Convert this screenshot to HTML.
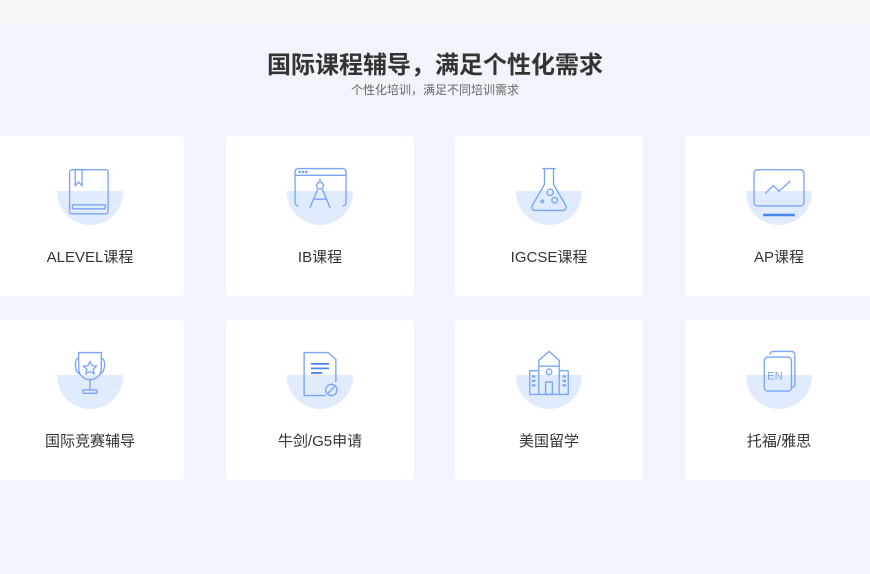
<!DOCTYPE html>
<html><head><meta charset="utf-8"><style>
*{margin:0;padding:0;box-sizing:border-box}
body{width:870px;height:574px;overflow:hidden;background:#f0f4fc;font-family:"Liberation Sans","Noto Sans CJK SC",sans-serif;position:relative}
.top{position:absolute;left:0;top:0;width:870px;height:24px;background:#f8f8f8}
h1{position:absolute;top:50px;left:0;width:870px;text-align:center;font-size:24px;font-weight:bold;color:#333;line-height:32px}
.sub{position:absolute;top:82px;left:0;width:870px;text-align:center;font-size:12px;color:#666;line-height:16px}
.card{position:absolute;width:188px;height:160px;background:#fff;border-radius:4px}
.half{position:absolute;left:61px;top:55px;width:66px;height:34px;background:#e0ebfd;border-radius:0 0 33px 33px}
.card svg{position:absolute;left:60px;top:28px;width:68px;height:68px}
.lab{position:absolute;top:110px;left:0;width:188px;text-align:center;font-size:15px;color:#333}
</style></head><body>
<div class="top"></div>
<h1>国际课程辅导，满足个性化需求</h1>
<div class="sub">个性化培训，满足不同培训需求</div>

<div class="card" style="left:-4px;top:136px"><div class="half"></div>
<svg viewBox="0 0 60 60" fill="none" stroke="#7aa5f7" stroke-width="1.2"><rect x="12" y="5" width="34" height="39" rx="2"/><path d="M17 5v14l3-3 3 3V5"/><rect x="14.5" y="36" width="29" height="3.5" rx="1"/></svg>
<div class="lab">ALEVEL课程</div></div>

<div class="card" style="left:226px;top:136px"><div class="half"></div>
<svg viewBox="0 0 60 60" fill="none" stroke="#7aa5f7" stroke-width="1.2"><path d="M8 34V7a3 3 0 0 1 3-3h39a3 3 0 0 1 3 3v27a3 3 0 0 1-3 3M8 34a3 3 0 0 0 3 3"/><path d="M8 10h45"/><circle cx="12" cy="7" r=".6" fill="#7aa5f7"/><circle cx="15" cy="7" r=".6" fill="#7aa5f7"/><circle cx="18" cy="7" r=".6" fill="#7aa5f7"/><path d="M30 13v3"/><circle cx="30" cy="19" r="3"/><path d="M28 22l-7 17M32 22l7 17M24 31h12"/></svg>
<div class="lab">IB课程</div></div>

<div class="card" style="left:455px;top:136px"><div class="half"></div>
<svg viewBox="0 0 60 60" fill="none" stroke="#7aa5f7" stroke-width="1.2"><path d="M24 4h12M26 4v14L15 37a3 3 0 0 0 3 4h24a3 3 0 0 0 3-4L34 18V4"/><circle cx="31" cy="25" r="2.8"/><circle cx="35" cy="32" r="2.5"/><circle cx="24" cy="33" r="1.2"/></svg>
<div class="lab">IGCSE课程</div></div>

<div class="card" style="left:685px;top:136px"><div class="half"></div>
<svg viewBox="0 0 60 60" fill="none" stroke="#7aa5f7" stroke-width="1.2"><rect x="8" y="5" width="44" height="32" rx="3"/><path d="M18 26l7-7 5 5 10-9"/><path d="M16 45h28" stroke="#4a86f0" stroke-width="2.2"/></svg>
<div class="lab">AP课程</div></div>

<div class="card" style="left:-4px;top:320px"><div class="half"></div>
<svg viewBox="0 0 60 60" fill="none" stroke="#7aa5f7" stroke-width="1.2"><path d="M20 4h20v14a10 10 0 0 1-20 0zM20 9c-4 0-4 12 1 14M40 9c4 0 4 12-1 14M30 28v9M24 37h12v3H24z"/><path d="M30 12l1.8 3.6 4 .5-3 2.7.8 4-3.6-2-3.6 2 .8-4-3-2.7 4-.5z"/></svg>
<div class="lab">国际竞赛辅导</div></div>

<div class="card" style="left:226px;top:320px"><div class="half"></div>
<svg viewBox="0 0 60 60" fill="none" stroke="#7aa5f7" stroke-width="1.2"><path d="M44 30V10l-7-6H16v38h19"/><path d="M22 14h16M22 18h16M22 22h10" stroke="#4a86f0" stroke-width="1.6"/><circle cx="40" cy="37" r="5"/><path d="M37 40l6-6"/></svg>
<div class="lab">牛剑/G5申请</div></div>

<div class="card" style="left:455px;top:320px"><div class="half"></div>
<svg viewBox="0 0 60 60" fill="none" stroke="#7aa5f7" stroke-width="1.2"><path d="M30 3l-9 8v5h18v-5zM21 16v25M39 16v25M13 20h8M39 20h8M13 20v21h34V20M13 41h34"/><circle cx="30" cy="21" r="2.5"/><rect x="27" y="30" width="6" height="11"/><path d="M15 25h3M15 29h3M15 33h3M42 25h3M42 29h3M42 33h3" stroke-width="2"/></svg>
<div class="lab">美国留学</div></div>

<div class="card" style="left:685px;top:320px"><div class="half"></div>
<svg viewBox="0 0 60 60" fill="none" stroke="#7aa5f7" stroke-width="1.2"><path d="M22 6a3 3 0 0 1 3-3h16a3 3 0 0 1 3 3v26a3 3 0 0 1-3 3"/><rect x="17" y="8" width="24" height="30" rx="3"/><text x="19.5" y="28" font-family="Liberation Sans" font-size="10" fill="#7aa5f7" stroke="none">EN</text></svg>
<div class="lab">托福/雅思</div></div>
</body></html>
